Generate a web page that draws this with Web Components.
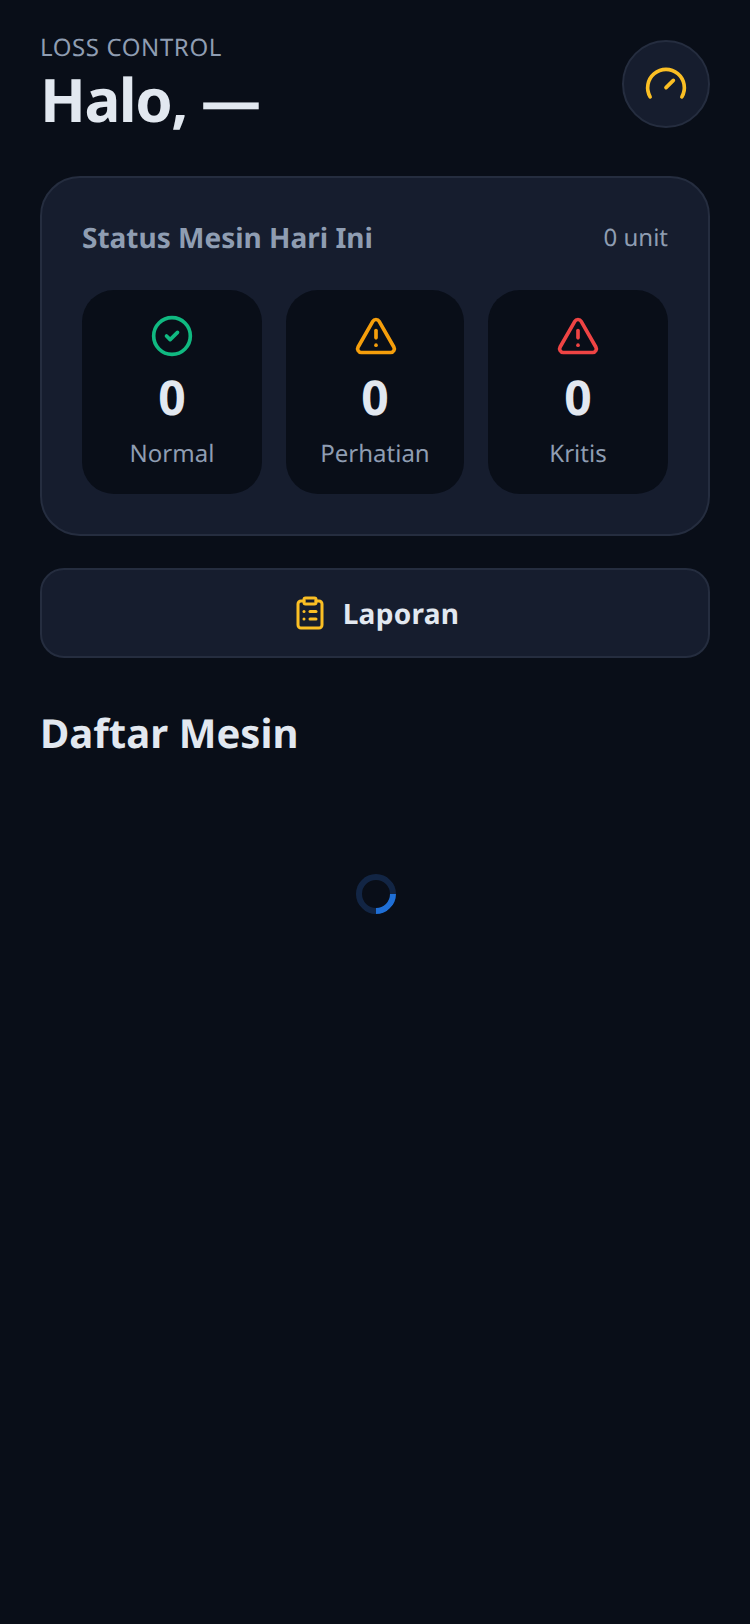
<!DOCTYPE html>
<html lang="id">
<head>
<meta charset="utf-8">
<title>Loss Control</title>
<style>
    html, body { margin: 0; padding: 0; background: #090e18; }
    body { font-family: "Noto Sans", sans-serif; color: #e2e8f0; min-height: 1624px; text-rendering: geometricPrecision; }
</style>
</head>
<body>
<loss-app></loss-app>
<script>
"use strict";
const ICONS = {
    gauge: '<path d="m12 14 4-4"/><path d="M3.34 19a10 10 0 1 1 17.32 0"/>',
    check: '<circle cx="12" cy="12" r="10"/><path d="m9 12 2 2 4-4"/>',
    alert: '<path d="m21.73 18-8-14a2 2 0 0 0-3.48 0l-8 14A2 2 0 0 0 4 21h16a2 2 0 0 0 1.73-3"/><path d="M12 9v4"/><path d="M12 17h.01"/>',
    clipboard: '<rect x="8" y="2" width="8" height="4" rx="1" ry="1"/><path d="M16 4h2a2 2 0 0 1 2 2v14a2 2 0 0 1-2 2H6a2 2 0 0 1-2-2V6a2 2 0 0 1 2-2h2"/><path d="M12 11h4"/><path d="M12 16h4"/><path d="M8 11h.01"/><path d="M8 16h.01"/>'
};

class AppIcon extends HTMLElement {
    connectedCallback() {
        const size = this.getAttribute('size') || 44;
        const color = this.getAttribute('color') || 'currentColor';
        const shadow = this.attachShadow({ mode: 'open' });
        shadow.innerHTML = `
            <style>
                :host { display: block; width: ${size}px; height: ${size}px; }
                svg { display: block; width: 100%; height: 100%; }
            </style>
            <svg viewBox="0 0 24 24" fill="none" stroke="${color}" stroke-width="2" stroke-linecap="round" stroke-linejoin="round">${ICONS[this.getAttribute('name')]}</svg>
        `;
    }
}
customElements.define('app-icon', AppIcon);

class AppHeader extends HTMLElement {
    constructor() {
        super();
        this.attachShadow({ mode: 'open' }).innerHTML = `
            <style>
                :host { display: flex; justify-content: space-between; align-items: flex-start; height: 100px; }
                .eyebrow { font-size: 24px; line-height: 32px; letter-spacing: 0.6px; color: #8f9db2; }
                h1 { margin: 0; font-size: 60px; line-height: 70px; font-weight: 700; color: #e2e8f0; letter-spacing: -1.5px; }
                .round {
                    box-sizing: border-box; width: 88px; height: 88px; margin-top: 8px;
                    display: flex; align-items: center; justify-content: center;
                    border-radius: 50%; background: #161d2e; border: 2px solid #252d3f;
                }
            </style>
            <div>
                <div class="eyebrow">LOSS CONTROL</div>
                <h1>Halo, —</h1>
            </div>
            <div class="round"><app-icon name="gauge" size="44" color="#fbbf24"></app-icon></div>
        `;
    }
}
customElements.define('app-header', AppHeader);

class StatTile extends HTMLElement {
    constructor() {
        super();
        this.attachShadow({ mode: 'open' }).innerHTML = `
            <style>
                :host {
                    display: flex; flex-direction: column; align-items: center;
                    height: 204px; box-sizing: border-box; padding-top: 24px;
                    background: #090e18; border-radius: 32px;
                }
                .value { font-size: 48px; line-height: 60px; font-weight: 700; color: #e2e8f0; margin-top: 10px; }
                .label { font-size: 24px; line-height: 32px; color: #8f9db2; margin-top: 10px; }
            </style>
            <slot name="icon"></slot>
            <div class="value"></div>
            <div class="label"></div>
        `;
    }
    connectedCallback() {
        this.shadowRoot.querySelector('.value').textContent = this.getAttribute('value');
        this.shadowRoot.querySelector('.label').textContent = this.getAttribute('label');
    }
}
customElements.define('stat-tile', StatTile);

class StatusCard extends HTMLElement {
    constructor() {
        super();
        this.attachShadow({ mode: 'open' }).innerHTML = `
            <style>
                :host {
                    display: block; box-sizing: border-box; margin-top: 44px; padding: 40px;
                    background: #161d2e; border: 2px solid #252d3f; border-radius: 40px;
                }
                .top { display: flex; justify-content: space-between; align-items: center; height: 40px; margin-bottom: 32px; }
                .title { font-size: 28px; font-weight: 700; color: #8f9db2; }
                .count { font-size: 24px; color: #8f9db2; margin-bottom: 2px; }
                .tiles { display: grid; grid-template-columns: 180px 178px 180px; gap: 24px; }
            </style>
            <div class="top">
                <div class="title">Status Mesin Hari Ini</div>
                <div class="count">0 unit</div>
            </div>
            <div class="tiles"><slot></slot></div>
        `;
    }
}
customElements.define('status-card', StatusCard);

class ReportButton extends HTMLElement {
    constructor() {
        super();
        this.attachShadow({ mode: 'open' }).innerHTML = `
            <style>
                :host {
                    display: flex; align-items: center; justify-content: center; gap: 15px;
                    box-sizing: border-box; height: 90px; margin-top: 32px; padding-left: 1px;
                    background: #161d2e; border: 2px solid #252d3f; border-radius: 24px;
                    font-size: 28px; line-height: 40px; font-weight: 700; letter-spacing: 0.3px; color: #e2e8f0;
                }
                span { padding-top: 2px; }
            </style>
            <app-icon name="clipboard" size="36" color="#fbbf24"></app-icon>
            <span><slot></slot></span>
        `;
    }
}
customElements.define('report-button', ReportButton);

class LoadSpinner extends HTMLElement {
    constructor() {
        super();
        this.attachShadow({ mode: 'open' }).innerHTML = `
            <style>
                :host { display: flex; justify-content: center; padding: 113px 0 0 2px; }
                .ring {
                    box-sizing: border-box; width: 40px; height: 40px; border-radius: 50%;
                    border: 6px solid rgba(59, 130, 246, 0.2);
                    border-right-color: #1f6fd6; transform: rotate(45deg);
                }
            </style>
            <div class="ring"></div>
        `;
    }
}
customElements.define('load-spinner', LoadSpinner);

class LossApp extends HTMLElement {
    constructor() {
        super();
        this.attachShadow({ mode: 'open' }).innerHTML = `
            <style>
                :host { display: block; box-sizing: border-box; padding: 32px 40px; }
                h2 { margin: 47px 0 0; font-size: 40px; line-height: 56px; font-weight: 700; letter-spacing: 0.05px; color: #e2e8f0; }
            </style>
            <app-header></app-header>
            <status-card>
                <stat-tile value="0" label="Normal"><app-icon slot="icon" name="check" color="#10b981"></app-icon></stat-tile>
                <stat-tile value="0" label="Perhatian"><app-icon slot="icon" name="alert" color="#f59e0b" style="margin-left: 2px"></app-icon></stat-tile>
                <stat-tile value="0" label="Kritis"><app-icon slot="icon" name="alert" color="#ef4444"></app-icon></stat-tile>
            </status-card>
            <report-button>Laporan</report-button>
            <h2>Daftar Mesin</h2>
            <load-spinner></load-spinner>
        `;
    }
}
customElements.define('loss-app', LossApp);
</script>
</body>
</html>
